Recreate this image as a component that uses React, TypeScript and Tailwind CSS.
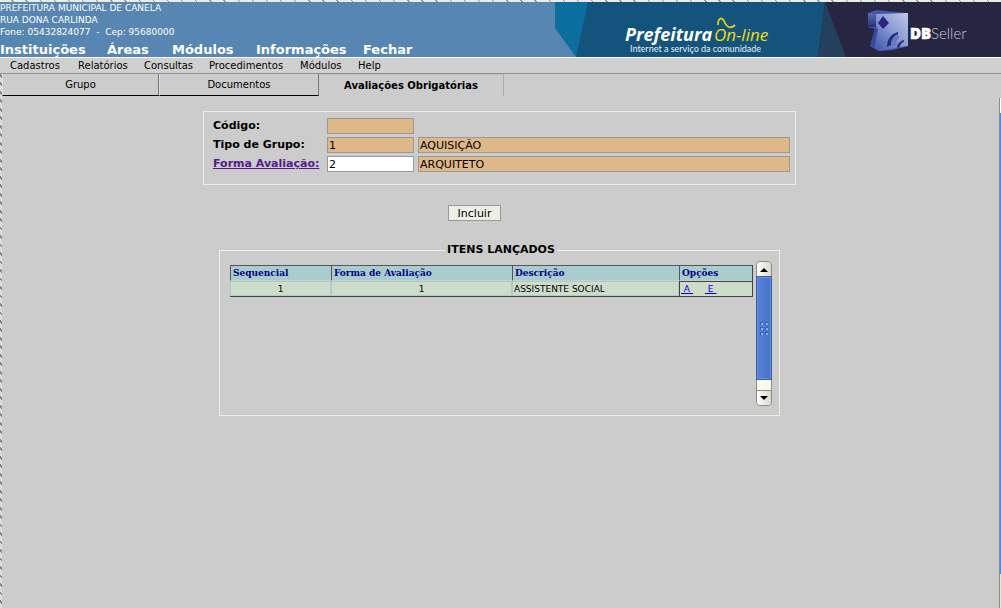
import React from "react";

const mainMenu = ["Instituições", "Áreas", "Módulos", "Informações", "Fechar"];
const subMenu = ["Cadastros", "Relatórios", "Consultas", "Procedimentos", "Módulos", "Help"];
const inputBase =
  "h-4 min-w-0 border border-[#999999] px-px pt-px text-[11px] leading-none font-normal text-black outline-none";

function Banner() {
  return (
    <svg
      className="h-[55px] w-[446px] shrink-0"
      viewBox="0 0 446 55"
      role="img"
      aria-label="Prefeitura On-line, DBSeller"
    >
      <defs>
        <linearGradient id="side" x1="0" y1="0" x2="0" y2="1">
          <stop offset="0" stopColor="#5a6cb4" />
          <stop offset="1" stopColor="#27307a" />
        </linearGradient>
        <linearGradient id="face" x1="1" y1="0" x2="0" y2="1">
          <stop offset="0" stopColor="#c0cae8" />
          <stop offset="0.45" stopColor="#8a9ad4" />
          <stop offset="1" stopColor="#3550ac" />
        </linearGradient>
      </defs>
      <rect width="446" height="55" fill="#14547c" />
      <path d="M0 0H33L21 55L0 26Z" fill="#0a6e9e" />
      <path d="M0 26L21 55H0Z" fill="#5886b2" />
      <path d="M270 0H446V55H263Z" fill="#262542" />
      <path d="M270 0L291 55H263Z" fill="#23405f" />
      <text x="70" y="39" fill="#ffffff" fontFamily="'Open Sans', sans-serif" fontSize="18" fontStyle="italic" fontWeight="700">
        Prefeitura
      </text>
      <text x="159" y="39" fill="#f2dc12" fontFamily="'Open Sans', sans-serif" fontSize="17" fontStyle="italic">
        On-line
      </text>
      <path d="M163 23C163 17 166 14 169 19C172 26 176 27 180 23" fill="none" stroke="#e2cf1b" strokeWidth="1.8" />
      <text x="75" y="50" fill="#e7f0f6" fontFamily="Lato, sans-serif" fontSize="9">
        Internet a serviço da comunidade
      </text>
      <path d="M313 11L321 8L353 11V44L338 48L323 49L315 44L320 27L313 25Z" fill="#4456a4" />
      <path d="M313 11L321 12V25L313 25Z" fill="url(#side)" />
      <path d="M321 12L353 11V44L341 46L325 49L317 44L323 27L321 25Z" fill="url(#face)" />
      <path d="M320 27L323 27L319 46L315 44Z" fill="#3a489c" />
      <path d="M328 14L334 21L328 27L323 21Z" fill="#29267a" />
      <path d="M343 30C336 32 332 37 332 45L336 43C336 37 339 34 343 33Z" fill="#252a78" />
      <path d="M343 32C338 34 336 38 336 44L341 43C341 39 342 37 344 36Z" fill="#6478c4" />
      <path d="M349 38C345 39 342 42 342 46L345 45C345 42 347 40 349 40Z" fill="#2c2f80" />
      <text x="355" y="37" fill="#ffffff" stroke="#ffffff" strokeWidth="0.6" fontFamily="'Open Sans', sans-serif" fontSize="15" fontWeight="800">
        DB
      </text>
      <text x="376" y="37" fill="#c9c8d4" fontFamily="Lato, sans-serif" fontSize="15" fontWeight="300">
        Seller
      </text>
    </svg>
  );
}

function Header() {
  return (
    <header>
      <div className="h-0.5 bg-[repeating-linear-gradient(45deg,#ececE6_0_9px,#999990_9px_10px)]" />
      <div className="flex justify-between bg-[#5886b2] text-white">
        <div className="flex min-w-0 flex-col justify-between">
          <address className="text-[9px] leading-3 whitespace-pre not-italic">
            <p>PREFEITURA MUNICIPAL DE CANELA</p>
            <p>RUA DONA CARLINDA</p>
            <p>Fone: 05432824077  -  Cep: 95680000</p>
          </address>
          <nav className="grid grid-cols-[107px_65px_84px_107px_auto] text-[13px] leading-[15px] font-bold">
            {mainMenu.map((item) => (
              <a key={item} href="#">
                {item}
              </a>
            ))}
          </nav>
        </div>
        <Banner />
      </div>
      <nav className="grid h-[17px] grid-cols-[68px_66px_65px_91px_58px_auto] border-t border-b border-t-white border-b-[#909090] bg-[#d0d0d0] pl-2.5 text-[10px] leading-[15px]">
        {subMenu.map((item) => (
          <a key={item} href="#">
            {item}
          </a>
        ))}
      </nav>
    </header>
  );
}

function Tabs() {
  const idle = "border-b border-l border-l-[#dddddd] border-r border-r-[#777777] border-b-black text-[10px]";
  return (
    <div role="tablist" className="grid h-[22px] grid-cols-[157px_160px_185px]">
      <button role="tab" aria-selected={false} className={idle}>
        Grupo
      </button>
      <button role="tab" aria-selected={false} className={idle}>
        Documentos
      </button>
      <button
        role="tab"
        aria-selected
        className="border-t border-r border-t-[#c0c0c0] border-r-[#aaaaaa] text-[10px] font-bold"
      >
        Avaliações Obrigatórias
      </button>
    </div>
  );
}

function ScrollBar() {
  return (
    <div className="flex w-4 shrink-0 flex-col rounded-sm border border-[#8c8c84] bg-[#fbfaf0]">
      <button aria-label="Rolar para cima" className="flex h-[15px] items-center justify-center rounded-t-sm bg-linear-to-r from-white to-[#ddd8cc]">
        <svg width="8" height="4" viewBox="0 0 8 4">
          <path d="M4 0L8 4H0Z" />
        </svg>
      </button>
      <div className="flex h-[102px] items-center justify-center border border-[#5a8ff0] bg-linear-to-r from-[#5582d8] to-[#4673c4] outline outline-[#3f5f95]">
        <div className="grid grid-cols-2 gap-x-0.5 gap-y-0.5">
          {[0, 1, 2, 3, 4, 5].map((dot) => (
            <span key={dot} className="size-[3px] border-t border-l border-[#3a62ac] bg-[#85aaf0]" />
          ))}
        </div>
      </div>
      <div className="grow" />
      <button aria-label="Rolar para baixo" className="flex h-[15px] items-center justify-center rounded-b-sm border-t border-[#8c8c84] bg-linear-to-r from-white to-[#ddd8cc]">
        <svg width="8" height="4" viewBox="0 0 8 4">
          <path d="M4 4L8 0H0Z" />
        </svg>
      </button>
    </div>
  );
}

function ItemsTable() {
  const head =
    "border-t border-l border-[#555555] pl-0.5 text-left font-bold text-[#000088] border-b border-b-[#cccccc]";
  const cell = "border border-[#a9cccc]";
  return (
    <table className="h-8 grow table-fixed border-separate border-spacing-0 self-start border-r border-b border-[#444444] bg-[#cdddca]">
      <colgroup>
        <col className="w-[101px]" />
        <col className="w-[181px]" />
        <col className="w-[167px]" />
        <col />
      </colgroup>
      <thead className="bg-[#a9cccc] font-['DejaVu_Serif_Condensed','DejaVu_Serif',serif] text-[10px] leading-[14px]">
        <tr>
          <th className={head}>Sequencial</th>
          <th className={head}>Forma de Avaliação</th>
          <th className={head}>Descrição</th>
          <th className={head}>Opções</th>
        </tr>
      </thead>
      <tbody className="text-[9px] leading-3">
        <tr>
          <td className={cell + " text-center"}>1</td>
          <td className={cell + " text-center"}>1</td>
          <td className={cell + " pl-px"}>ASSISTENTE SOCIAL</td>
          <td className="border-t border-l border-[#444444] pl-px">
            <span className="flex gap-3 whitespace-pre text-[#0000ee] underline">
              <a href="#"> A </a>
              <a href="#"> E </a>
            </span>
          </td>
        </tr>
      </tbody>
    </table>
  );
}

export default function App() {
  return (
    <div className="flex min-h-screen flex-col bg-[#cccccc] font-['DejaVu_Sans',sans-serif] text-black">
      <Header />
      <div className="flex grow">
        <div className="w-0.5 bg-[repeating-linear-gradient(45deg,#dddddd_0_4px,#888888_4px_6px)]" />
        <div className="min-w-0 grow">
          <Tabs />
          <main className="flex flex-col items-center pt-[15px] pr-0.5">
            <form className="flex flex-col items-center" onSubmit={(e) => e.preventDefault()}>
              <div className="grid h-[74px] w-[593px] grid-cols-[110px_87px_1fr] content-start items-center gap-x-1 gap-y-px border border-[#eeeee6] pt-[5px] pr-[5px] pl-[9px] text-[11px] leading-[18px] font-bold">
                <label htmlFor="codigo">Código:</label>
                <input id="codigo" readOnly className={inputBase + " bg-[#deb887]"} />
                <span />
                <label htmlFor="tipo">Tipo de Grupo:</label>
                <input id="tipo" readOnly defaultValue="1" className={inputBase + " bg-[#deb887]"} />
                <input aria-label="Descrição do tipo" readOnly defaultValue="AQUISIÇÃO" className={inputBase + " bg-[#deb887]"} />
                <label htmlFor="forma">
                  <a href="#" className="text-[#551a8b] underline">
                    Forma Avaliação:
                  </a>
                </label>
                <input id="forma" defaultValue="2" className={inputBase + " bg-white"} />
                <input aria-label="Descrição da forma" readOnly defaultValue="ARQUITETO" className={inputBase + " bg-[#deb887]"} />
              </div>
              <button className="mt-5 mr-[50px] h-4 w-[53px] border border-[#999999] bg-[#eeeee6] text-[11px] leading-4">
                Incluir
              </button>
            </form>
            <fieldset className="mt-5 w-[561px] border border-[#eeeee6] pt-0.5 pr-[7px] pb-[9px] pl-2.5">
              <legend className="mx-auto px-0.5 text-[11px] leading-[18px] font-bold">ITENS LANÇADOS</legend>
              <div className="flex h-[145px] gap-[3px]">
                <div className="flex grow pt-1">
                  <ItemsTable />
                </div>
                <ScrollBar />
              </div>
            </fieldset>
          </main>
        </div>
        <div className="flex w-0.5 flex-col border-l border-[#8c8c84] bg-[#e8e4dc]">
          <div className="-ml-px h-6 bg-[#cccccc]" />
          <div className="h-[15px] bg-white" />
          <div className="h-[461px] bg-[#4f86ea]" />
        </div>
      </div>
    </div>
  );
}
